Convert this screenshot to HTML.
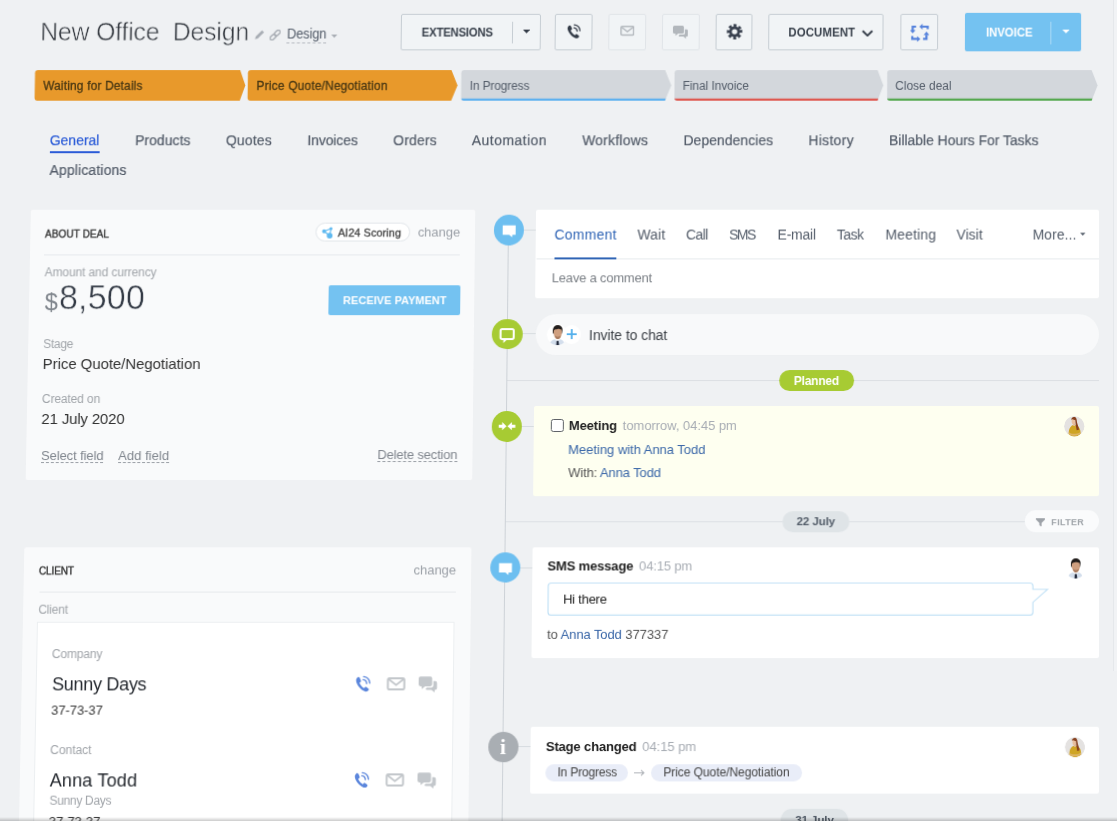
<!DOCTYPE html>
<html><head><meta charset="utf-8"><title>Deal</title>
<style>
html,body{margin:0;padding:0;background:#eff1f3;overflow:hidden;width:1117px;height:821px}
body{font-family:"Liberation Sans",sans-serif;color:#333;position:relative}
#r{position:absolute;left:0;top:0;width:1117px;height:821px;filter:blur(.45px)}
#r>div,#r>span,#r>svg{position:absolute;display:block;box-sizing:border-box}
#r>span{white-space:pre}
.b{font-weight:bold}
#shade{position:absolute;left:0;top:817px;width:1117px;height:4px;background:linear-gradient(rgba(0,0,0,0),rgba(0,0,0,.2))}
#strip{position:absolute;left:1113px;top:0;width:4px;height:671px;background:#f1f3f5;border-left:1px solid #e5e8eb;box-sizing:border-box}

#r{transform-origin:1100px 410px;transform:matrix3d(1,0,0,0, 0,1,0,-1.8e-05, 0,0,1,0, 0,0,0,1);}
</style></head><body>
<div id="r">
<span id="t0" style="left:32.92px;top:12.94px;font-size:25px;line-height:32px;letter-spacing:-0.18px;color:#2f343b;-webkit-text-stroke:.55px #eff1f3;transform:scaleY(1.04);transform-origin:0 26px;">New Office  Design</span>
<svg style="left:248.68px;top:27.38px;" width="10.17" height="9.93" viewBox="0 0 10 10"><path d="M0.2 9.8 L0.9 7 L7.2 0.7 L9.3 2.8 L3 9.1 Z" fill="#a8adb4"/></svg>
<svg style="left:263.77px;top:26.88px;" width="11.08" height="11.15" viewBox="0 0 11 11"><g transform="rotate(-45 5.5 5.5)" fill="none" stroke="#a8adb4" stroke-width="1.4"><rect x="-0.8" y="3.6" width="6.6" height="3.8" rx="1.9"/><rect x="5.2" y="3.6" width="6.6" height="3.8" rx="1.9"/></g></svg>
<span id="t1" style="left:281.44px;top:22.92px;font-size:13px;line-height:17px;letter-spacing:-0.12px;color:#535c69;transform:scaleY(1.1);transform-origin:0 14.3px;">Design</span>
<div style="left:281.49px;top:40.15px;width:39.86px;height:1.01px;border-top:1px dashed #b4b9bf;"></div>
<svg style="left:326.28px;top:32.45px;" width="6.24" height="3.24" viewBox="0 0 6 3"><path d="M0 0H6L3 3Z" fill="#a8adb4"/></svg>
<div style="left:396.28px;top:10.85px;width:140.3px;height:37.61px;border:1px solid #c6cdd3;border-radius:2px;background:#f1f4f6;"></div>
<span id="t2" class="b" style="left:417.12px;top:22.81px;font-size:11.5px;line-height:15px;letter-spacing:-0.26px;color:#3a424d;transform:scaleY(1.07);transform-origin:0 11.77px;">EXTENSIONS</span>
<div style="left:508.26px;top:18.56px;width:1.01px;height:22.91px;background:#c6cdd3;"></div>
<svg style="left:519.33px;top:27.38px;" width="7.15" height="3.75" viewBox="0 0 7 3.6"><path d="M0 0H7L3.5 3.6Z" fill="#333b47"/></svg>
<div style="left:551.49px;top:10.85px;width:37.17px;height:37.61px;border:1px solid #c6cdd3;border-radius:2px;background:#f1f4f6;"></div>
<svg style="left:563.06px;top:20.69px;" width="14.2" height="15.71" viewBox="0 0 14 15.5"><path d="M2.3 1.9 C1.2 2.8 0.6 4 1 5.6 C1.8 9 5 12.7 8.5 14.3 C10.1 15 11.4 14.5 12.2 13.4 C12.6 12.9 12.5 12.3 12 11.9 L10.3 10.6 C9.8 10.3 9.2 10.4 8.9 10.8 L8.2 11.6 C6.4 10.7 4.6 8.6 3.9 6.7 L4.8 6.1 C5.3 5.8 5.4 5.2 5.2 4.7 L4.2 2.5 C3.8 1.7 3 1.4 2.3 1.9 Z" fill="#333b47"/><path d="M7.2 4 A3.6 3.6 0 0 1 10.4 7.4 M7.6 1.2 A6.4 6.4 0 0 1 13.2 7" fill="none" stroke="#333b47" stroke-width="1.25" stroke-linecap="round"/></svg>
<div style="left:604.87px;top:10.85px;width:37.87px;height:37.61px;border:1px solid #e0e4e8;border-radius:2px;background:#f1f4f6;"></div>
<svg style="left:616.76px;top:23.43px;" width="14.3" height="10.34" viewBox="0 0 14 10"><rect x=".75" y=".75" width="12.5" height="8.5" rx="1.2" fill="none" stroke="#b4b9be" stroke-width="1.5"/><path d="M1.2 1.4L7 5.9L12.8 1.4" fill="none" stroke="#b4b9be" stroke-width="1.4"/></svg>
<div style="left:658.95px;top:10.85px;width:37.77px;height:37.61px;border:1px solid #e0e4e8;border-radius:2px;background:#f1f4f6;"></div>
<svg style="left:670.33px;top:23.43px;" width="15.1" height="13.18" viewBox="0 0 15 13"><path d="M1.5 0h8a1.5 1.5 0 0 1 1.5 1.5v5a1.5 1.5 0 0 1-1.5 1.5h-4.3l-2.7 2.2v-2.2h-1a1.5 1.5 0 0 1-1.5-1.5v-5a1.5 1.5 0 0 1 1.5-1.5z" fill="#b2b7bc"/><path d="M12 3.8h1.5a1.5 1.5 0 0 1 1.5 1.5v4.2a1.5 1.5 0 0 1-1.5 1.5h-.4v2l-2.6-2h-3.6a1.5 1.5 0 0 1-1.2-.7l.9-1.3h3.9a1.5 1.5 0 0 0 1.5-1.5z" fill="#b2b7bc"/></svg>
<div style="left:712.54px;top:10.85px;width:37.67px;height:37.61px;border:1px solid #c6cdd3;border-radius:2px;background:#f1f4f6;"></div>
<svg style="left:723.89px;top:21.3px;" width="16.21" height="16.22" viewBox="0 0 16 16"><circle cx="8" cy="8" r="6.1" fill="none" stroke="#3a4250" stroke-width="3.2" stroke-dasharray="2.7 2.09" transform="rotate(-16 8 8)"/><circle cx="8" cy="8" r="4.1" fill="none" stroke="#3a4250" stroke-width="2.8"/></svg>
<div style="left:766.02px;top:10.85px;width:116.23px;height:37.61px;border:1px solid #c6cdd3;border-radius:2px;background:#f1f4f6;"></div>
<span id="t3" class="b" style="left:786.29px;top:22.81px;font-size:11.5px;line-height:15px;letter-spacing:0.09px;color:#3a424d;transform:scaleY(1.07);transform-origin:0 11.77px;">DOCUMENT</span>
<svg style="left:859.75px;top:26.67px;" width="11.78" height="7.6" viewBox="0 0 11.7 7.5"><path d="M1 1.2L5.85 6L10.7 1.2" fill="none" stroke="#333b47" stroke-width="1.9"/></svg>
<div style="left:898.66px;top:10.85px;width:37.87px;height:37.61px;border:1px solid #c6cdd3;border-radius:2px;background:#f1f4f6;"></div>
<svg style="left:908.87px;top:21.3px;" width="19.13" height="18.25" viewBox="0 0 19 18"><g fill="none" stroke="#5582dc" stroke-width="2.2"><path d="M5.8 2.9H2.4V7"/><path d="M17.4 5.4V2.9H12"/><path d="M12.8 15.3H16.2V11"/><path d="M2 12.4V15.3H7"/></g><g fill="#5582dc"><path d="M-.5 6.400H5.300L2.400 9.700Z"/><path d="M12.300 0V5.800L9 2.900Z"/><path d="M13.300 11.300H19.100L16.200 8Z"/><path d="M6.800 12.400V18.200L10.100 15.300Z"/></g></svg>
<div style="left:964.33px;top:10.45px;width:116.63px;height:38.12px;background:#74c2f1;border-radius:2px;"></div>
<span id="t4" class="b" style="left:985.13px;top:22.81px;font-size:11.5px;line-height:15px;letter-spacing:-0.06px;color:#fff;transform:scaleY(1.07);transform-origin:0 11.77px;">INVOICE</span>
<div style="left:1049.95px;top:18.76px;width:1.01px;height:22.81px;background:rgba(255,255,255,.4);"></div>
<svg style="left:1061.74px;top:27.38px;" width="7.65" height="3.85" viewBox="0 0 7 3.6"><path d="M0 0H7L3.5 3.6Z" fill="#fff"/></svg>
<svg style="left:23.37px;top:65.88px;" width="1078.64" height="35.41" viewBox="30 68 1072 35"><path d="M38.5 70H240.6L246 85.3L240.6 100.6H38.5Q35.5 100.6 35.5 97.6V73Q35.5 70 38.5 70Z" fill="#e8992b"/><path d="M251.4 70H451.9L458.1 85.3L451.9 100.6H251.4Q248.4 100.6 248.4 97.6V73Q248.4 70 251.4 70Z" fill="#e8992b"/><clipPath id="c461"><path d="M464.8 70H665.6L671.8 85.3L665.6 100.6H464.8Q461.8 100.6 461.8 97.6V73Q461.8 70 464.8 70Z"/></clipPath><path d="M464.8 70H665.6L671.8 85.3L665.6 100.6H464.8Q461.8 100.6 461.8 97.6V73Q461.8 70 464.8 70Z" fill="#d3d7dc"/><rect x="461.8" y="98.4" width="205.3" height="2.2" fill="#5fb1ef" clip-path="url(#c461)"/><clipPath id="c675"><path d="M678 70H878L883.8 85.3L878 100.6H678Q675 100.6 675 97.6V73Q675 70 678 70Z"/></clipPath><path d="M678 70H878L883.8 85.3L878 100.6H678Q675 100.6 675 97.6V73Q675 70 678 70Z" fill="#d3d7dc"/><rect x="675" y="98.4" width="204.5" height="2.2" fill="#de5850" clip-path="url(#c675)"/><clipPath id="c887"><path d="M890.6 70H1092L1098 85.3L1092 100.6H890.6Q887.6 100.6 887.6 97.6V73Q887.6 70 890.6 70Z"/></clipPath><path d="M890.6 70H1092L1098 85.3L1092 100.6H890.6Q887.6 100.6 887.6 97.6V73Q887.6 70 890.6 70Z" fill="#d3d7dc"/><rect x="887.6" y="98.4" width="205.9" height="2.2" fill="#55a84f" clip-path="url(#c887)"/></svg>
<span id="t5" style="left:36.99px;top:76.13px;font-size:12px;line-height:16px;letter-spacing:0.16px;color:#4a3813;-webkit-text-stroke:.3px currentColor;transform:scaleY(1.06);transform-origin:0 12.72px;">Waiting for Details</span>
<span id="t6" style="left:251.52px;top:76.13px;font-size:12px;line-height:16px;letter-spacing:0.2px;color:#4a3813;-webkit-text-stroke:.3px currentColor;transform:scaleY(1.06);transform-origin:0 12.72px;">Price Quote/Negotiation</span>
<span id="t7" style="left:465.96px;top:76.13px;font-size:12px;line-height:16px;letter-spacing:-0.11px;color:#535c69;transform:scaleY(1.06);transform-origin:0 12.72px;">In Progress</span>
<span id="t8" style="left:680.19px;top:76.13px;font-size:12px;line-height:16px;letter-spacing:-0.05px;color:#535c69;transform:scaleY(1.06);transform-origin:0 12.72px;">Final Invoice</span>
<span id="t9" style="left:894.12px;top:76.13px;font-size:12px;line-height:16px;letter-spacing:-0.02px;color:#535c69;transform:scaleY(1.06);transform-origin:0 12.72px;">Close deal</span>
<span id="t10" style="left:130.39px;top:129.94px;font-size:14px;line-height:18px;letter-spacing:0.07px;color:#535c69;-webkit-text-stroke:.2px currentColor;transform:scaleY(1.05);transform-origin:0 14.7px;">Products</span>
<span id="t11" style="left:221.72px;top:129.94px;font-size:14px;line-height:18px;letter-spacing:0.16px;color:#535c69;-webkit-text-stroke:.2px currentColor;transform:scaleY(1.05);transform-origin:0 14.7px;">Quotes</span>
<span id="t12" style="left:303.51px;top:129.94px;font-size:14px;line-height:18px;letter-spacing:-0.09px;color:#535c69;-webkit-text-stroke:.2px currentColor;transform:scaleY(1.05);transform-origin:0 14.7px;">Invoices</span>
<span id="t13" style="left:389.82px;top:129.94px;font-size:14px;line-height:18px;letter-spacing:0.18px;color:#535c69;-webkit-text-stroke:.2px currentColor;transform:scaleY(1.05);transform-origin:0 14.7px;">Orders</span>
<span id="t14" style="left:468.8px;top:129.94px;font-size:14px;line-height:18px;letter-spacing:0.46px;color:#535c69;-webkit-text-stroke:.2px currentColor;transform:scaleY(1.05);transform-origin:0 14.7px;">Automation</span>
<span id="t15" style="left:579.63px;top:129.94px;font-size:14px;line-height:18px;letter-spacing:0.24px;color:#535c69;-webkit-text-stroke:.2px currentColor;transform:scaleY(1.05);transform-origin:0 14.7px;">Workflows</span>
<span id="t16" style="left:681.41px;top:129.94px;font-size:14px;line-height:18px;letter-spacing:0.05px;color:#535c69;-webkit-text-stroke:.2px currentColor;transform:scaleY(1.05);transform-origin:0 14.7px;">Dependencies</span>
<span id="t17" style="left:807.01px;top:129.94px;font-size:14px;line-height:18px;letter-spacing:0.31px;color:#535c69;-webkit-text-stroke:.2px currentColor;transform:scaleY(1.05);transform-origin:0 14.7px;">History</span>
<span id="t18" style="left:887.99px;top:129.94px;font-size:14px;line-height:18px;letter-spacing:-0.02px;color:#535c69;-webkit-text-stroke:.2px currentColor;transform:scaleY(1.05);transform-origin:0 14.7px;">Billable Hours For Tasks</span>
<span id="t19" style="left:44.68px;top:129.94px;font-size:14px;line-height:18px;letter-spacing:0px;color:#2a5bd7;-webkit-text-stroke:.2px currentColor;transform:scaleY(1.05);transform-origin:0 14.7px;">General</span>
<div style="left:44.79px;top:150.09px;width:49.83px;height:2.12px;background:#2a5bd7;"></div>
<span id="t20" style="left:44.94px;top:159.5px;font-size:14px;line-height:18px;letter-spacing:0.17px;color:#535c69;-webkit-text-stroke:.2px currentColor;transform:scaleY(1.05);transform-origin:0 14.7px;">Applications</span>
<div style="left:27.44px;top:209.28px;width:446.01px;height:270.63px;background:#f9fafb;border-radius:2px;"></div>
<span id="t21" style="left:41.71px;top:226.56px;font-size:10px;line-height:13px;letter-spacing:0.11px;color:#333;-webkit-text-stroke:.35px #333;">ABOUT DEAL</span>
<div style="left:313.35px;top:222.37px;width:94.62px;height:18.52px;background:#fff;border:1px solid #e2e6ea;border-radius:10px;"></div>
<svg style="left:319.02px;top:225.89px;" width="12.04" height="13.08" viewBox="0 0 12 13"><g stroke="#5fb9f0" stroke-width="1.1"><path d="M2.6 4.7L8.2 9M9.5 2L8.2 9M2.6 4.7L9.5 2"/></g><circle cx="8.2" cy="9" r="2.9" fill="#5fb9f0"/><circle cx="2.6" cy="4.7" r="2" fill="#5fb9f0"/><circle cx="9.5" cy="2" r="1.5" fill="#5fb9f0"/></svg>
<span id="t22" style="left:335.41px;top:225.06px;font-size:11px;line-height:14px;letter-spacing:0.04px;color:#444;-webkit-text-stroke:.3px currentColor;">AI24 Scoring</span>
<span id="t23" style="left:415.67px;top:223.16px;font-size:13px;line-height:17px;letter-spacing:-0.04px;color:#9ca1a8;">change</span>
<div style="left:41.33px;top:253.56px;width:416.97px;height:1.01px;background:#e6e9ec;"></div>
<span id="t24" style="left:42.05px;top:263.98px;font-size:12px;line-height:16px;letter-spacing:-0.1px;color:#a1a5aa;">Amount and currency</span>
<span id="t25" style="left:42.7px;top:287.12px;font-size:23.5px;line-height:31px;letter-spacing:0px;color:#7f858c;">$</span>
<span id="t26" style="left:56.93px;top:274.76px;font-size:34px;line-height:44px;letter-spacing:0.21px;color:#333a45;-webkit-text-stroke:.5px #f9fafb;transform:scaleY(1.04);transform-origin:0 35.36px;">8,500</span>
<div style="left:327.37px;top:285.42px;width:131.19px;height:29.82px;background:#74c2f1;border-radius:2px;"></div>
<span id="t27" class="b" style="left:341.57px;top:293.43px;font-size:11px;line-height:14px;letter-spacing:0.03px;color:#fff;transform:scaleY(1.07);transform-origin:0 11.77px;">RECEIVE PAYMENT</span>
<span id="t28" style="left:42.12px;top:335.93px;font-size:12px;line-height:16px;letter-spacing:-0.31px;color:#a1a5aa;">Stage</span>
<span id="t29" style="left:41.83px;top:354.37px;font-size:15px;line-height:20px;letter-spacing:-0.06px;color:#333;">Price Quote/Negotiation</span>
<span id="t30" style="left:41.86px;top:390.6px;font-size:12px;line-height:16px;letter-spacing:-0.13px;color:#a1a5aa;">Created on</span>
<span id="t31" style="left:41.57px;top:409px;font-size:15px;line-height:20px;letter-spacing:-0.17px;color:#333;">21 July 2020</span>
<span id="t32" style="left:41.94px;top:446.56px;font-size:13px;line-height:17px;letter-spacing:-0.1px;color:#80868e;">Select field</span>
<div style="left:41.99px;top:461.95px;width:62.44px;height:1px;border-top:1px dashed #9a9fa6;"></div>
<span id="t33" style="left:119.08px;top:446.56px;font-size:13px;line-height:17px;letter-spacing:0.03px;color:#80868e;">Add field</span>
<div style="left:119.12px;top:461.95px;width:50.85px;height:1px;border-top:1px dashed #9a9fa6;"></div>
<span id="t34" style="left:378.04px;top:445.86px;font-size:13px;line-height:17px;letter-spacing:-0.18px;color:#80868e;">Delete section</span>
<div style="left:378.07px;top:461.25px;width:80.03px;height:1px;border-top:1px dashed #9a9fa6;"></div>
<div style="left:26.95px;top:546.66px;width:445.7px;height:290.03px;background:#f9fafb;border-radius:2px;"></div>
<span id="t35" style="left:41.92px;top:563.52px;font-size:10px;line-height:13px;letter-spacing:-0.11px;color:#333;-webkit-text-stroke:.35px #333;">CLIENT</span>
<span id="t36" style="left:415.62px;top:560.82px;font-size:13px;line-height:17px;letter-spacing:-0.06px;color:#9ca1a8;">change</span>
<div style="left:43.05px;top:590.91px;width:415.04px;height:0.99px;background:#e6e9ec;"></div>
<span id="t37" style="left:42.17px;top:600.76px;font-size:12px;line-height:16px;letter-spacing:-0.2px;color:#a1a5aa;">Client</span>
<div style="left:41.04px;top:621.19px;width:416.41px;height:215.5px;background:#fff;border:1px solid #eceff1;"></div>
<span id="t38" style="left:56.55px;top:644.7px;font-size:12px;line-height:16px;letter-spacing:-0.21px;color:#a1a5aa;">Company</span>
<span id="t39" style="left:57.18px;top:672.13px;font-size:18px;line-height:23px;letter-spacing:-0.32px;color:#262a30;transform:scaleY(1.05);transform-origin:0 17.85px;">Sunny Days</span>
<span id="t40" style="left:56.81px;top:699.64px;font-size:13px;line-height:17px;letter-spacing:-0.1px;color:#3a3a3a;">37-73-37</span>
<span id="t41" style="left:56.56px;top:739.88px;font-size:12px;line-height:16px;letter-spacing:-0.04px;color:#a1a5aa;">Contact</span>
<span id="t42" style="left:56.68px;top:766.61px;font-size:18px;line-height:23px;letter-spacing:0.13px;color:#262a30;transform:scaleY(1.05);transform-origin:0 17.85px;">Anna Todd</span>
<span id="t43" style="left:56.71px;top:789.92px;font-size:12px;line-height:16px;letter-spacing:-0.33px;color:#a1a5aa;">Sunny Days</span>
<span id="t44" style="left:56.52px;top:810.11px;font-size:13px;line-height:17px;letter-spacing:-0.12px;color:#3a3a3a;">37-73-37</span>
<svg style="left:358.24px;top:674.04px;" width="17.02" height="17.13" viewBox="0 0 14 15.5"><path d="M2.3 1.9 C1.2 2.8 0.6 4 1 5.6 C1.8 9 5 12.7 8.5 14.3 C10.1 15 11.4 14.5 12.2 13.4 C12.6 12.9 12.5 12.3 12 11.9 L10.3 10.6 C9.8 10.3 9.2 10.4 8.9 10.8 L8.2 11.6 C6.4 10.7 4.6 8.6 3.9 6.7 L4.8 6.1 C5.3 5.8 5.4 5.2 5.2 4.7 L4.2 2.5 C3.8 1.7 3 1.4 2.3 1.9 Z" fill="#5b86dc"/><path d="M7.2 4 A3.6 3.6 0 0 1 10.4 7.4 M7.6 1.2 A6.4 6.4 0 0 1 13.2 7" fill="none" stroke="#5b86dc" stroke-width="1.25" stroke-linecap="round"/></svg>
<svg style="left:389.91px;top:675.72px;" width="19.11" height="13.07" viewBox="0 0 14 10"><rect x=".75" y=".75" width="12.5" height="8.5" rx="1.2" fill="none" stroke="#c3c7cb" stroke-width="1.5"/><path d="M1.2 1.4L7 5.9L12.8 1.4" fill="none" stroke="#c3c7cb" stroke-width="1.4"/></svg>
<svg style="left:422.25px;top:674.73px;" width="18.31" height="16.24" viewBox="0 0 15 13"><path d="M1.5 0h8a1.5 1.5 0 0 1 1.5 1.5v5a1.5 1.5 0 0 1-1.5 1.5h-4.3l-2.7 2.2v-2.2h-1a1.5 1.5 0 0 1-1.5-1.5v-5a1.5 1.5 0 0 1 1.5-1.5z" fill="#c3c7cb"/><path d="M12 3.8h1.5a1.5 1.5 0 0 1 1.5 1.5v4.2a1.5 1.5 0 0 1-1.5 1.5h-.4v2l-2.6-2h-3.6a1.5 1.5 0 0 1-1.2-.7l.9-1.3h3.9a1.5 1.5 0 0 0 1.5-1.5z" fill="#c3c7cb"/></svg>
<svg style="left:358.12px;top:768.87px;" width="16.99" height="17.07" viewBox="0 0 14 15.5"><path d="M2.3 1.9 C1.2 2.8 0.6 4 1 5.6 C1.8 9 5 12.7 8.5 14.3 C10.1 15 11.4 14.5 12.2 13.4 C12.6 12.9 12.5 12.3 12 11.9 L10.3 10.6 C9.8 10.3 9.2 10.4 8.9 10.8 L8.2 11.6 C6.4 10.7 4.6 8.6 3.9 6.7 L4.8 6.1 C5.3 5.8 5.4 5.2 5.2 4.7 L4.2 2.5 C3.8 1.7 3 1.4 2.3 1.9 Z" fill="#5b86dc"/><path d="M7.2 4 A3.6 3.6 0 0 1 10.4 7.4 M7.6 1.2 A6.4 6.4 0 0 1 13.2 7" fill="none" stroke="#5b86dc" stroke-width="1.25" stroke-linecap="round"/></svg>
<svg style="left:390.14px;top:770.64px;" width="19.08" height="13.03" viewBox="0 0 14 10"><rect x=".75" y=".75" width="12.5" height="8.5" rx="1.2" fill="none" stroke="#c3c7cb" stroke-width="1.5"/><path d="M1.2 1.4L7 5.9L12.8 1.4" fill="none" stroke="#c3c7cb" stroke-width="1.4"/></svg>
<svg style="left:422.42px;top:769.66px;" width="18.28" height="16.18" viewBox="0 0 15 13"><path d="M1.5 0h8a1.5 1.5 0 0 1 1.5 1.5v5a1.5 1.5 0 0 1-1.5 1.5h-4.3l-2.7 2.2v-2.2h-1a1.5 1.5 0 0 1-1.5-1.5v-5a1.5 1.5 0 0 1 1.5-1.5z" fill="#c3c7cb"/><path d="M12 3.8h1.5a1.5 1.5 0 0 1 1.5 1.5v4.2a1.5 1.5 0 0 1-1.5 1.5h-.4v2l-2.6-2h-3.6a1.5 1.5 0 0 1-1.2-.7l.9-1.3h3.9a1.5 1.5 0 0 0 1.5-1.5z" fill="#c3c7cb"/></svg>
<div style="left:506.48px;top:239.48px;width:1px;height:597.22px;background:#cdd2d7;"></div>
<div style="left:491.66px;top:214.11px;width:30.51px;height:30.6px;background:#6dbff0;border-radius:50%;"></div>
<svg style="left:491.66px;top:214.11px;" width="30.51" height="30.6" viewBox="0 0 30 30"><path d="M8.6 10.6h12.8v9.2h-3.2l-.2 2.6l-3-2.6h-6.4z" fill="#fff"/></svg>
<div style="left:522.13px;top:229.21px;width:12.64px;height:1.01px;background:#d7dce0;"></div>
<div style="left:534.36px;top:209.28px;width:564.43px;height:89px;background:#fff;border-radius:2px;"></div>
<div style="left:534.86px;top:257.78px;width:563.94px;height:1.01px;background:#e6eaed;"></div>
<span id="t45" style="left:552.63px;top:224.74px;font-size:14px;line-height:18px;letter-spacing:0.28px;color:#2f64b5;transform:scaleY(1.06);transform-origin:0 14.84px;">Comment</span>
<div style="left:552.79px;top:256.58px;width:62.37px;height:2.31px;background:#2f64b5;"></div>
<span id="t46" style="left:635.88px;top:224.74px;font-size:14px;line-height:18px;letter-spacing:0.2px;color:#535c69;transform:scaleY(1.06);transform-origin:0 14.84px;">Wait</span>
<span id="t47" style="left:684.83px;top:224.74px;font-size:14px;line-height:18px;letter-spacing:-0.59px;color:#535c69;transform:scaleY(1.06);transform-origin:0 14.84px;">Call</span>
<span id="t48" style="left:728.06px;top:224.74px;font-size:14px;line-height:18px;letter-spacing:-1.58px;color:#535c69;transform:scaleY(1.06);transform-origin:0 14.84px;">SMS</span>
<span id="t49" style="left:776.61px;top:224.74px;font-size:14px;line-height:18px;letter-spacing:-0.25px;color:#535c69;transform:scaleY(1.06);transform-origin:0 14.84px;">E-mail</span>
<span id="t50" style="left:835.89px;top:224.74px;font-size:14px;line-height:18px;letter-spacing:-0.5px;color:#535c69;transform:scaleY(1.06);transform-origin:0 14.84px;">Task</span>
<span id="t51" style="left:884.64px;top:224.74px;font-size:14px;line-height:18px;letter-spacing:0.19px;color:#535c69;transform:scaleY(1.06);transform-origin:0 14.84px;">Meeting</span>
<span id="t52" style="left:956.06px;top:224.74px;font-size:14px;line-height:18px;letter-spacing:0.04px;color:#535c69;transform:scaleY(1.06);transform-origin:0 14.84px;">Visit</span>
<span id="t53" style="left:1032.39px;top:224.74px;font-size:14px;line-height:18px;letter-spacing:0.06px;color:#535c69;transform:scaleY(1.06);transform-origin:0 14.84px;">More...</span>
<svg style="left:1080.44px;top:232.43px;" width="5.52" height="3.02" viewBox="0 0 6 3"><path d="M0 0H6L3 3Z" fill="#535c69"/></svg>
<span id="t54" style="left:550.53px;top:268.7px;font-size:13px;line-height:17px;letter-spacing:-0.19px;color:#7a7f85;">Leave a comment</span>
<div style="left:491.4px;top:318.55px;width:30.45px;height:30.48px;background:#a7cb33;border-radius:50%;"></div>
<svg style="left:491.4px;top:318.55px;" width="30.45" height="30.48" viewBox="0 0 30 30"><rect x="8.6" y="9.8" width="13" height="9.8" rx="1.6" fill="none" stroke="#fff" stroke-width="2"/><path d="M11.4 20.4v3.2l3.4-3.2z" fill="#fff"/></svg>
<div style="left:521.8px;top:333.29px;width:13.42px;height:1px;background:#d7dce0;"></div>
<div style="left:534.62px;top:313.63px;width:564.18px;height:41.11px;background:#f8f9fa;border-radius:20.5px 20.5px 20.5px 20.5px;"></div>
<svg style="left:545.64px;top:324.17px;" width="21.03" height="21.26" viewBox="0 0 21 21"><clipPath id="mc1"><circle cx="10.5" cy="10.5" r="10.5"/></clipPath><g clip-path="url(#mc1)"><circle cx="10.5" cy="10.5" r="10.5" fill="#fff"/><path d="M6.300 9.500C5.300 5.200 6.600 1.400 10.300 1C13.800 .7 16.200 3 15.600 6.600L15.200 9.500Z" fill="#211d1b"/><path d="M7 6.200C8.400 4.600 12.600 4.300 14.700 5.400C15.200 8.400 14.900 11.600 13.600 13.500C12.300 15.200 9.900 15.300 8.500 13.600C7.200 11.800 6.600 8.800 7 6.200Z" fill="#cf9f7f"/><path d="M8.200 11.200C9.500 13 12.300 13 13.900 11.200C13.700 12.600 13.300 13.600 12.700 14.300C11.600 15.200 10.200 15.100 9.200 14.200C8.700 13.500 8.400 12.500 8.200 11.200Z" fill="#a87a5e"/><path d="M3 21C3.200 17.800 5 15.800 8.200 15L10.800 17.200L13.400 15C16.400 15.800 17.600 17.800 17.800 21Z" fill="#d3deec"/><path d="M9.900 16.600H11.800L12.500 21H9.600Z" fill="#222a3c"/></g></svg>
<div style="left:562.18px;top:325.47px;width:18.03px;height:18.05px;background:#fff;border-radius:50%;"></div>
<svg style="left:566.13px;top:329.38px;" width="10.01" height="10.13" viewBox="0 0 10 10"><path d="M5 0V10M0 5H10" stroke="#52afeb" stroke-width="1.800"/></svg>
<span id="t55" style="left:588.35px;top:325.51px;font-size:14px;line-height:18px;letter-spacing:-0.08px;color:#3a3f45;">Invite to chat</span>
<div style="left:507.28px;top:379.78px;width:591.52px;height:1px;background:#dce0e4;"></div>
<div style="left:779.47px;top:369.97px;width:74.45px;height:21.42px;background:#a7cb33;border-radius:11px;"></div>
<span id="t56" class="b" style="left:793.86px;top:372.59px;font-size:12px;line-height:16px;letter-spacing:-0.26px;color:#fff;">Planned</span>
<div style="left:491.51px;top:411.3px;width:30.4px;height:30.38px;background:#a7cb33;border-radius:50%;"></div>
<svg style="left:491.51px;top:411.3px;" width="30.4" height="30.38" viewBox="0 0 30 30"><path d="M6.800 13.500h3.400v-2.600l4.300 4.100l-4.300 4.100v-2.600h-3.400z" fill="#fff"/><path d="M23.200 13.500h-3.400v-2.600l-4.300 4.100l4.300 4.100v-2.600h3.400z" fill="#fff"/></svg>
<div style="left:521.97px;top:426px;width:12.8px;height:1px;background:#d7dce0;"></div>
<div style="left:534.26px;top:406px;width:564.44px;height:89.57px;background:#fefff0;border-radius:2px;"></div>
<div style="left:551.09px;top:419.3px;width:12.8px;height:12.69px;background:#fff;border:1.200px solid #5f6368;border-radius:2.500px;"></div>
<span id="t57" class="b" style="left:568.99px;top:417.09px;font-size:13px;line-height:17px;letter-spacing:-0.16px;color:#222;">Meeting</span>
<span id="t58" style="left:622.87px;top:417.09px;font-size:13px;line-height:17px;letter-spacing:-0.05px;color:#a8adb4;">tomorrow, 04:45 pm</span>
<span id="t59" style="left:568.52px;top:440.87px;font-size:13px;line-height:17px;letter-spacing:-0.03px;color:#3a67a8;">Meeting with Anna Todd</span>
<span id="t60" style="left:568.74px;top:464.12px;font-size:13px;line-height:17px;letter-spacing:-0.12px;color:#555;">With: <i style="font-style:normal;color:#3a67a8">Anna Todd</i></span>
<svg style="left:1064.4px;top:416.1px;" width="20.6" height="20.69" viewBox="0 0 20 20"><clipPath id="wc1"><circle cx="10" cy="10" r="10"/></clipPath><g clip-path="url(#wc1)"><circle cx="10" cy="10" r="10" fill="#e4e2e1"/><path d="M4.600 17.500C4.400 13.500 5.600 9.900 8.800 8.800L10 9.700L11.400 8.800C14.600 9.600 16.400 13 16 17.500C13 20.800 7.600 20.800 4.600 17.500Z" fill="#cfa524"/><path d="M4.700 15.800C7 17.500 12 18.100 16 15.400L16 17.300C12.500 19.900 7.500 19.700 4.600 17.600Z" fill="#dcb567"/><path d="M8.900 7H10.700V9.300L9.900 10L8.900 9.200Z" fill="#e2b593"/><path d="M7.600 3.400C8.600 2.500 10.300 2.700 10.900 4C11.100 5.600 10.900 7.200 10.100 8C9.300 8.600 8.300 8.200 7.800 7.200C7.400 6 7.300 4.600 7.600 3.400Z" fill="#e8bf9f"/><path d="M7 3.700C7.100 1.600 8.900 .6 10.500 1C11.900 1.400 12.300 3 12.500 5C12.900 8 14.300 10.500 14.500 13.200L12.300 13.800L11.300 8.200L11 4.200L8.200 3.200Z" fill="#86401f"/></g></svg>
<div style="left:506.98px;top:520.58px;width:523.16px;height:1px;background:#dce0e4;"></div>
<div style="left:782.58px;top:510.52px;width:67.88px;height:21.21px;background:#dfe4e7;border-radius:11px;"></div>
<span id="t61" class="b" style="left:797.13px;top:514.26px;font-size:11.5px;line-height:15px;letter-spacing:-0.06px;color:#525c68;">22 July</span>
<div style="left:1024.54px;top:510.32px;width:74.17px;height:21.41px;background:#fafbfc;border-radius:11px;"></div>
<svg style="left:1035.53px;top:517.59px;" width="9.18" height="8.57" viewBox="0 0 9.200 8.600"><path d="M0 0h9.200v1.300l-3.500 3.400v3.900l-2.200-1.500v-2.400l-3.500-3.400z" fill="#9da2a8"/></svg>
<span id="t62" class="b" style="left:1051.3px;top:516.16px;font-size:9px;line-height:12px;letter-spacing:0.34px;color:#a0a5aa;">FILTER</span>
<div style="left:491.56px;top:551.94px;width:30.32px;height:30.23px;background:#6dbff0;border-radius:50%;"></div>
<svg style="left:491.56px;top:551.94px;" width="30.32" height="30.23" viewBox="0 0 30 30"><path d="M8.6 10.6h12.8v9.2h-3.2l-.2 2.6l-3-2.6h-6.4z" fill="#fff"/></svg>
<div style="left:521.83px;top:566.56px;width:13.06px;height:0.99px;background:#d7dce0;"></div>
<div style="left:534.4px;top:546.86px;width:564.41px;height:109.84px;background:#fff;border-radius:2px;"></div>
<span id="t63" class="b" style="left:549.1px;top:557.44px;font-size:13px;line-height:17px;letter-spacing:-0.19px;color:#222;">SMS message</span>
<span id="t64" style="left:640.33px;top:557.44px;font-size:13px;line-height:17px;letter-spacing:-0.17px;color:#a8adb4;">04:15 pm</span>
<svg style="left:547.71px;top:581.17px;" width="502.45" height="35.06" viewBox="546 581.700 504 35.300"><path d="M550 583.200H1030.600Q1033.600 583.200 1033.600 586.200V589.500H1048.200L1033.600 602.500V612.400Q1033.600 615.400 1030.600 615.400H550Q547 615.400 547 612.400V586.200Q547 583.200 550 583.200Z" fill="#fff" stroke="#c3e2f6" stroke-width="1.200"/></svg>
<span id="t65" style="left:564.96px;top:589.83px;font-size:13px;line-height:17px;letter-spacing:-0.26px;color:#222;">Hi there</span>
<span id="t66" style="left:549.27px;top:625.46px;font-size:13px;line-height:17px;letter-spacing:-0.1px;color:#555;">to <i style="font-style:normal;color:#3a67a8">Anna Todd</i> 377337</span>
<svg style="left:1064.59px;top:557.11px;" width="20.94" height="21.08" viewBox="0 0 21 21"><clipPath id="mc2"><circle cx="10.5" cy="10.5" r="10.5"/></clipPath><g clip-path="url(#mc2)"><circle cx="10.5" cy="10.5" r="10.5" fill="#fff"/><path d="M6.300 9.500C5.300 5.200 6.600 1.400 10.300 1C13.800 .7 16.200 3 15.600 6.600L15.200 9.500Z" fill="#211d1b"/><path d="M7 6.200C8.400 4.600 12.600 4.300 14.700 5.400C15.200 8.400 14.900 11.600 13.600 13.500C12.300 15.200 9.900 15.300 8.500 13.600C7.200 11.800 6.600 8.800 7 6.200Z" fill="#cf9f7f"/><path d="M8.200 11.200C9.500 13 12.300 13 13.900 11.200C13.700 12.600 13.300 13.600 12.700 14.300C11.600 15.200 10.200 15.100 9.200 14.200C8.700 13.500 8.400 12.500 8.200 11.200Z" fill="#a87a5e"/><path d="M3 21C3.200 17.800 5 15.800 8.200 15L10.800 17.200L13.400 15C16.400 15.800 17.600 17.800 17.800 21Z" fill="#d3deec"/><path d="M9.900 16.600H11.800L12.500 21H9.600Z" fill="#222a3c"/></g></svg>
<div style="left:491.82px;top:729.65px;width:30.23px;height:30.03px;background:#a9aeb3;border-radius:50%;"></div>
<svg style="left:491.82px;top:729.65px;" width="30.23" height="30.03" viewBox="0 0 30 30"></svg>
<span id="t67" class="b" style="left:503.5px;top:730.48px;font-size:22px;line-height:29px;letter-spacing:0px;color:#fff;font-family:'Liberation Serif',serif;">i</span>
<div style="left:522px;top:744.18px;width:12.82px;height:0.99px;background:#d7dce0;"></div>
<div style="left:534.32px;top:724.81px;width:564.48px;height:66.56px;background:#fff;border-radius:2px;"></div>
<span id="t68" class="b" style="left:549.18px;top:735.62px;font-size:13px;line-height:17px;letter-spacing:-0.18px;color:#222;">Stage changed</span>
<span id="t69" style="left:645.09px;top:735.62px;font-size:13px;line-height:17px;letter-spacing:-0.09px;color:#a8adb4;">04:15 pm</span>
<div style="left:548.71px;top:761.66px;width:82.18px;height:17.47px;background:#e9edf8;border-radius:9px;"></div>
<span id="t70" style="left:560.96px;top:762.39px;font-size:12px;line-height:16px;letter-spacing:-0.21px;color:#444;">In Progress</span>
<svg style="left:637.19px;top:767.19px;" width="11.13" height="6.91" viewBox="0 0 11.200 7"><path d="M0 3.500H10M7 .8L10 3.500L7 6.200" fill="none" stroke="#b0b4b9" stroke-width="1.100"/></svg>
<div style="left:653.64px;top:761.66px;width:150.44px;height:17.47px;background:#e9edf8;border-radius:9px;"></div>
<span id="t71" style="left:666.16px;top:762.39px;font-size:12px;line-height:16px;letter-spacing:-0.09px;color:#444;">Price Quote/Negotiation</span>
<svg style="left:1064.91px;top:734.89px;" width="20.18" height="20.15" viewBox="0 0 20 20"><clipPath id="wc2"><circle cx="10" cy="10" r="10"/></clipPath><g clip-path="url(#wc2)"><circle cx="10" cy="10" r="10" fill="#e4e2e1"/><path d="M4.600 17.500C4.400 13.500 5.600 9.900 8.800 8.800L10 9.700L11.400 8.800C14.600 9.600 16.400 13 16 17.500C13 20.800 7.600 20.800 4.600 17.500Z" fill="#cfa524"/><path d="M4.700 15.800C7 17.500 12 18.100 16 15.400L16 17.300C12.500 19.900 7.500 19.700 4.600 17.600Z" fill="#dcb567"/><path d="M8.900 7H10.700V9.300L9.900 10L8.900 9.200Z" fill="#e2b593"/><path d="M7.600 3.400C8.600 2.500 10.300 2.700 10.900 4C11.100 5.600 10.900 7.200 10.100 8C9.300 8.600 8.300 8.200 7.800 7.200C7.400 6 7.300 4.600 7.600 3.400Z" fill="#e8bf9f"/><path d="M7 3.700C7.100 1.600 8.900 .6 10.500 1C11.900 1.400 12.300 3 12.500 5C12.900 8 14.300 10.500 14.500 13.200L12.300 13.800L11.300 8.200L11 4.200L8.200 3.200Z" fill="#86401f"/></g></svg>
<div style="left:782.68px;top:806.45px;width:67.51px;height:21.38px;background:#dfe4e7;border-radius:11px;"></div>
<span id="t72" class="b" style="left:797.46px;top:810.13px;font-size:11.5px;line-height:15px;letter-spacing:-0.11px;color:#525c68;">31 July</span>
</div>
<div id="strip"></div>
<div id="shade"></div>
</body></html>
